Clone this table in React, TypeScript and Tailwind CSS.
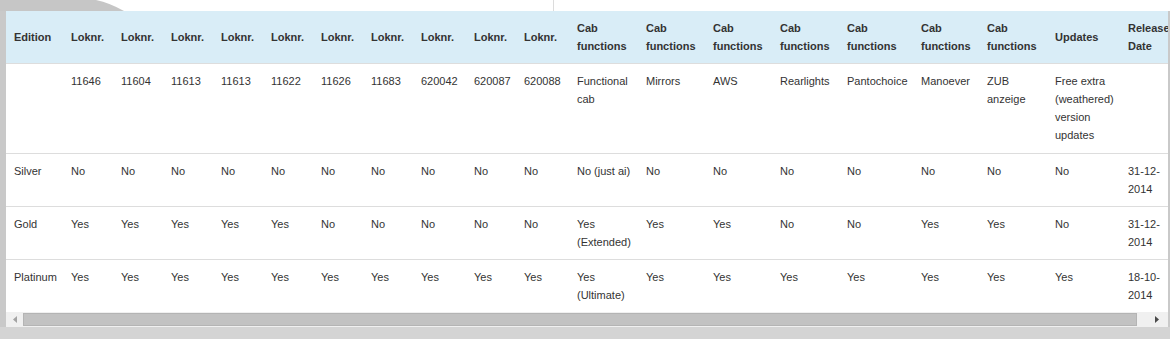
import React from "react"

const headers = [
    "Edition",
    ...Array(10).fill("Loknr."),
    ...Array(7).fill("Cab functions"),
    "Updates",
    "Release Date",
]

// column widths read off the reference
const colWidths = [
    "w-[57px]",
    "w-[50px]", "w-[50px]", "w-[50px]", "w-[50px]", "w-[50px]", "w-[50px]", "w-[50px]",
    "w-[53px]", "w-[50px]", "w-[53px]",
    "w-[69px]", "w-[67px]", "w-[67px]", "w-[67px]", "w-[74px]", "w-[66px]", "w-[68px]",
    "w-[73px]", "w-[60px]",
]

const rows: string[][] = [
    ["", "11646", "11604", "11613", "11613", "11622", "11626", "11683", "620042", "620087", "620088",
        "Functional cab", "Mirrors", "AWS", "Rearlights", "Pantochoice", "Manoever", "ZUB anzeige",
        "Free extra (weathered) version updates", ""],
    ["Silver", ...Array(10).fill("No"), "No (just ai)", ...Array(7).fill("No"), "31-12-2014"],
    ["Gold", "Yes", "Yes", "Yes", "Yes", "Yes", "No", "No", "No", "No", "No",
        "Yes (Extended)", "Yes", "Yes", "No", "No", "Yes", "Yes", "No", "31-12-2014"],
    ["Platinum", ...Array(10).fill("Yes"), "Yes (Ultimate)", ...Array(7).fill("Yes"), "18-10-2014"],
]

const Scrollbar = () => (
    <div className="flex h-[15px] bg-[#f0f0f0]">
        <div className="flex w-[17px] items-center justify-center">
            <svg width="4" height="7" viewBox="0 0 4 7">
                <path d="M4 0 L0 3.5 L4 7 Z" fill="#a3a3a3" />
            </svg>
        </div>
        <div className="my-[1px] flex-1 border border-[#b4b4b4] bg-[#c2c2c2]" />
        <div className="flex w-[31px] items-center justify-end pr-[9px]">
            <svg width="4" height="7" viewBox="0 0 4 7">
                <path d="M0 0 L4 3.5 L0 7 Z" fill="#4a4a4a" />
            </svg>
        </div>
    </div>
)

export default function App() {
    return (
        <div className="flex h-[339px] w-[1170px] flex-col overflow-hidden bg-[#c9c9c9] font-['Liberation_Sans',Arial,sans-serif] text-[11px] leading-[18px] text-[#333]">
            <div className="flex h-[11px] bg-white">
                <svg width="130" height="11" viewBox="0 0 130 11" className="shrink-0">
                    <path d="M0 0 H96 Q110 3 124 11 H0 Z" fill="#c6c6c6" />
                </svg>
                <div className="w-[423px]" />
                <div className="w-px bg-[#dcdcdc]" />
            </div>
            <div className="ml-[6px] mr-[2px] flex flex-col bg-white">
                <div className="overflow-hidden">
                    <table className="w-[1174px] table-fixed border-collapse">
                        <colgroup>
                            {colWidths.map((w, i) => (
                                <col key={i} className={w} />
                            ))}
                        </colgroup>
                        <thead>
                            <tr className="bg-[#d9edf7]">
                                {headers.map((h, i) => (
                                    <th key={i} className="whitespace-nowrap p-2 text-left align-middle font-bold">
                                        {h === "Cab functions" || h === "Release Date"
                                            ? <>{h.split(" ")[0]}<br />{h.split(" ")[1]}</>
                                            : h}
                                    </th>
                                ))}
                            </tr>
                        </thead>
                        <tbody>
                            {rows.map((row, r) => (
                                <tr key={r} className="border-t border-[#dddddd]">
                                    {row.map((cell, c) => (
                                        <td
                                            key={c}
                                            className={r === 0
                                                ? "px-2 pt-2 pb-[9px] text-left align-top"
                                                : cell === "No (just ai)"
                                                    ? "whitespace-nowrap p-2 text-left align-top"
                                                    : "p-2 text-left align-top"}
                                        >
                                            {cell}
                                        </td>
                                    ))}
                                </tr>
                            ))}
                        </tbody>
                    </table>
                </div>
                <Scrollbar />
            </div>
            <div className="flex-1 bg-[#d4d4d4]" />
        </div>
    )
}
